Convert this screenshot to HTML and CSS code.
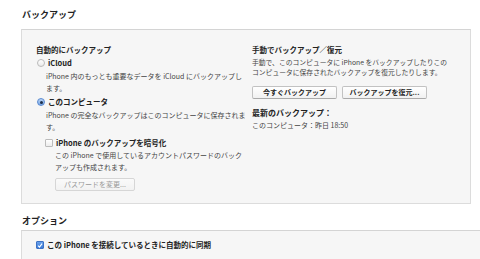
FILE: index.html
```html
<!DOCTYPE html>
<html lang="ja">
<head>
    <meta charset="UTF-8">
    <meta name="viewport" content="width=device-width, initial-scale=1.0">
    <title>バックアップ</title>
    <link rel="stylesheet" href="styles.css">
</head>
<body>
    <div class="page">
        <h2 class="section-title first">バックアップ</h2>
        <div class="panel backup">
            <div class="col left">
                <div class="label">自動的にバックアップ</div>
                <div class="option">
                    <span class="radio"></span>
                    <span class="label">iCloud</span>
                </div>
                <p class="desc indent">iPhone 内のもっとも重要なデータを iCloud にバックアップします。</p>
                <div class="option second">
                    <span class="radio on"></span>
                    <span class="label">このコンピュータ</span>
                </div>
                <p class="desc indent">iPhone の完全なバックアップはこのコンピュータに保存されます。</p>
                <div class="option encrypt">
                    <span class="check"></span>
                    <span class="label">iPhone のバックアップを暗号化</span>
                </div>
                <p class="desc indent2">この iPhone で使用しているアカウントパスワードのバックアップも作成されます。</p>
                <button class="button disabled pw">パスワードを変更...</button>
            </div>
            <div class="col right">
                <div class="label">手動でバックアップ／復元</div>
                <p class="desc tight">手動で、このコンピュータに iPhone をバックアップしたりこの<br>コンピュータに保存されたバックアップを復元したりします。</p>
                <div class="buttons">
                    <button class="button">今すぐバックアップ</button>
                    <button class="button">バックアップを復元...</button>
                </div>
                <div class="label latest">最新のバックアップ：</div>
                <div class="desc">このコンピュータ：昨日 18:50</div>
            </div>
        </div>

        <h2 class="section-title">オプション</h2>
        <div class="panel options">
            <div class="option">
                <span class="check on">
                    <svg width="7" height="7" viewBox="0 0 7 7"><path d="M1.2 3.6 L2.9 5.3 L5.9 1.4" fill="none" stroke="#fff" stroke-width="1.3"/></svg>
                </span>
                <span class="label">この iPhone を接続しているときに自動的に同期</span>
            </div>
        </div>
    </div>
</body>
</html>
```

FILE: styles.css
```css
body {
    margin: 0;
    background-color: #ffffff;
    font-family: "Noto Sans CJK JP", "Noto Sans", sans-serif;
    color: #333;
}
.page {
    padding: 9px 9px 0 21px;
}
.section-title {
    font-size: 9px;
    line-height: 12px;
    font-weight: bold;
    color: #222;
    margin: 11px 0 3px 1px;
}
.section-title.first {
    margin: 0 0 8px 1px;
}
.panel {
    width: 448px;
    background-color: #f6f6f6;
    border: 1px solid #dcdcdc;
    border-top-color: #d4d4d4;
}
.backup {
    display: flex;
    padding: 14px 0 12px 14px;
    box-sizing: border-box;
    width: 450px;
}
.col.left {
    width: 216px;
}
.col.right {
    flex: 1;
}
.label {
    font-size: 7.5px;
    line-height: 12px;
    font-weight: bold;
    color: #222;
}
.option {
    display: flex;
    align-items: center;
    margin-top: 1px;
}
.option.second {
    margin-top: 2px;
}
.option.encrypt {
    margin-top: 4px;
    padding-left: 9px;
}
.desc {
    font-size: 7px;
    line-height: 12px;
    color: #444;
    margin: 0;
}
.desc.indent {
    margin-top: 1px;
    padding-left: 10px;
    padding-right: 4px;
}
.desc.indent2 {
    padding-left: 19px;
    padding-right: 4px;
}
.desc.tight {
    font-size: 6.8px;
    line-height: 10px;
    padding-top: 1px;
    white-space: nowrap;
}
.radio {
    width: 6px;
    height: 6px;
    border-radius: 50%;
    border: 1px solid #bbb;
    background: linear-gradient(#fff, #eaeaea);
    margin: 0 3px 0 1px;
    display: inline-block;
    position: relative;
}
.radio.on {
    border-color: #5a8ad0;
    background: linear-gradient(#b9d4f5, #7aa8e6);
}
.radio.on::after {
    content: "";
    position: absolute;
    left: 1.5px;
    top: 1.5px;
    width: 3px;
    height: 3px;
    border-radius: 50%;
    background-color: #1d2f4a;
}
.check {
    width: 6px;
    height: 6px;
    border: 1px solid #bbb;
    border-radius: 1px;
    background: linear-gradient(#fff, #ececec);
    margin-right: 3px;
    display: inline-flex;
    align-items: center;
    justify-content: center;
}
.check.on {
    border-color: #3d72c4;
    background: linear-gradient(#6aa2ec, #3b7bd8);
}
.check svg {
    display: block;
}
.options {
    padding: 8px 0 8px 14px;
    height: 30px;
}
.options .option {
    margin-top: 0;
}
.button {
    font-family: "Noto Sans CJK JP", "Noto Sans", sans-serif;
    font-size: 7px;
    font-weight: bold;
    color: #222;
    height: 13px;
    padding: 0;
    line-height: 11px;
    background: linear-gradient(#ffffff, #f1f1f1);
    border: 1px solid #c2c2c2;
    border-bottom-color: #aaa;
    border-radius: 2px;
    cursor: pointer;
}
.buttons {
    display: flex;
    gap: 5px;
    margin-top: 9px;
}
.buttons .button {
    width: 85px;
}
.button.disabled {
    color: #999;
    font-weight: normal;
    border-color: #d6d6d6;
    background: linear-gradient(#fafafa, #f2f2f2);
}
.pw {
    width: 80px;
    margin: 5px 0 0 19px;
    display: block;
}
.latest {
    margin-top: 8px;
    font-size: 8px;
}
```
